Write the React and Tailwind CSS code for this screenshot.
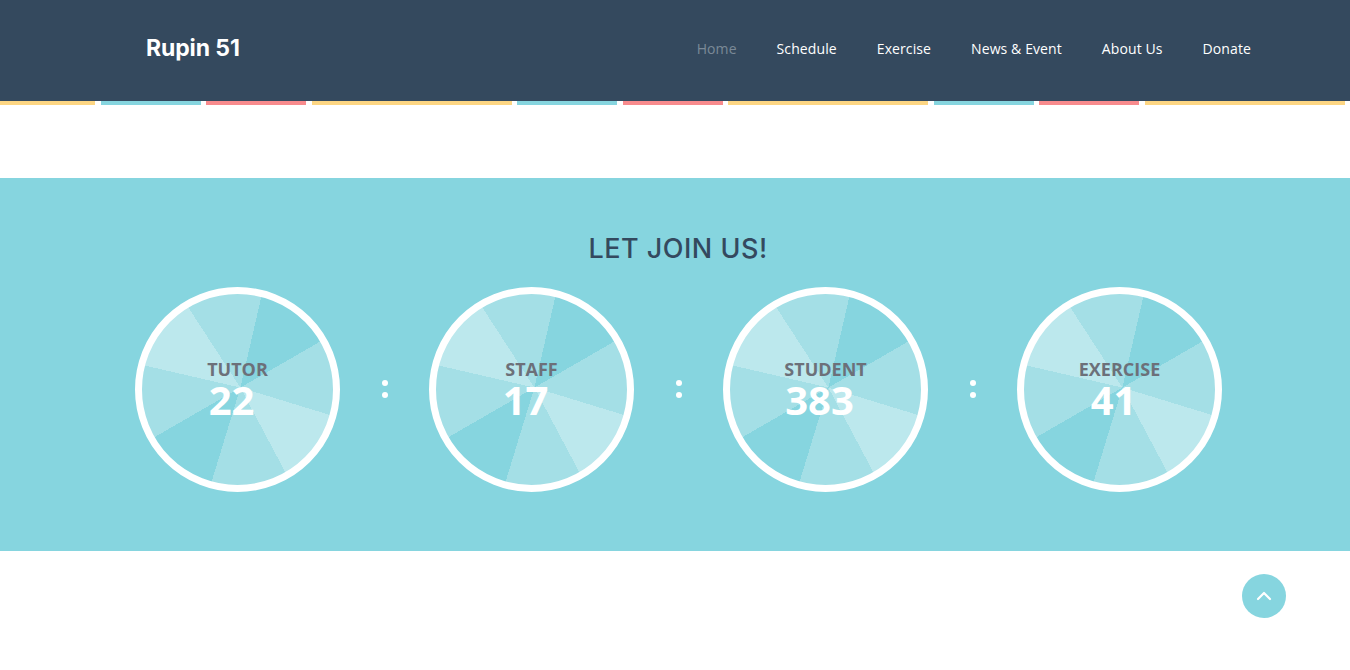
import { ChevronUp } from 'lucide-react'

const NAV = ['Home', 'Schedule', 'Exercise', 'News & Event', 'About Us', 'Donate']

const STRIPE = [
  { w: 'w-[95px]', c: 'bg-[#fdd683]' },
  { w: 'w-[100px]', c: 'bg-[#86d5df]' },
  { w: 'w-[100px]', c: 'bg-[#f88b8d]' },
  { w: 'w-[200px]', c: 'bg-[#fdd683]' },
  { w: 'w-[100px]', c: 'bg-[#86d5df]' },
  { w: 'w-[100px]', c: 'bg-[#f88b8d]' },
  { w: 'w-[200px]', c: 'bg-[#fdd683]' },
  { w: 'w-[100px]', c: 'bg-[#86d5df]' },
  { w: 'w-[100px]', c: 'bg-[#f88b8d]' },
  { w: 'w-[200px]', c: 'bg-[#fdd683]' },
]

const COUNTERS = [
  { label: 'TUTOR', value: 22 },
  { label: 'STAFF', value: 17 },
  { label: 'STUDENT', value: 383 },
  { label: 'EXERCISE', value: 41 },
]

function Counter({ label, value }) {
  return (
    <div className="w-[205px] h-[205px] shrink-0 rounded-full border-[7px] border-white bg-[conic-gradient(from_13deg_at_51.5%_49%,#86d5df_0deg_47deg,#a4dfe6_47deg_94deg,#bce8ed_94deg_139deg,#a4dfe6_139deg_184deg,#86d5df_184deg_227deg,#a4dfe6_227deg_270deg,#bce8ed_270deg_314deg,#a4dfe6_314deg_360deg)] flex flex-col items-center justify-center gap-[2px]">
      <div className="text-[18px] leading-none font-bold text-[#6c7079]">{label}</div>
      <div className="text-[40px] leading-none font-bold text-white pr-[12px]">{value}</div>
    </div>
  )
}

function Colon() {
  return (
    <div className="w-[89px] shrink-0 flex flex-col items-center gap-[6px] pb-[1px]">
      <span className="w-[6px] h-[6px] rounded-full bg-white" />
      <span className="w-[6px] h-[6px] rounded-full bg-white" />
    </div>
  )
}

export default function App() {
  return (
    <div className="relative min-h-[670px] bg-white font-['Open_Sans',sans-serif]">
      {/* Header */}
      <header className="h-[101px] bg-[#34495e] flex items-center justify-between pl-[146px] pr-[99px] pb-[4px]">
        <div className="font-['Inter',sans-serif] font-bold text-[23px] text-white tracking-[-0.1px]">Rupin 51</div>
        <nav className="flex items-center gap-10 text-[14px] tracking-[0.1px]">
          {NAV.map((n, i) => (
            <a key={n} href="#" className={i === 0 ? 'text-[#7b8997]' : 'text-white'}>{n}</a>
          ))}
        </nav>
      </header>
      <div className="h-[4px] flex gap-[5.5px]">
        {STRIPE.map((s, i) => <div key={i} className={`${s.w} ${s.c} h-full shrink-0`} />)}
      </div>

      <div className="h-[73px]" />

      {/* Counters */}
      <section className="h-[373px] bg-[#86d5df] flex flex-col items-center">
        <h2 className="mt-[57px] pl-[6px] font-['Inter',sans-serif] font-medium text-[27px] leading-none text-[#34495e] tracking-[0.5px]">LET JOIN US!</h2>
        <div className="mt-[25px] flex items-center pl-[7px]">
          {COUNTERS.map((c, i) => (
            <div key={c.label} className="flex items-center">
              <Counter {...c} />
              {i < COUNTERS.length - 1 && <Colon />}
            </div>
          ))}
        </div>
      </section>

      {/* Back to top */}
      <button className="absolute left-[1242px] top-[574px] w-[44px] h-[44px] rounded-full bg-[#86d5df] flex items-center justify-center text-white">
        <ChevronUp size={24} strokeWidth={2.2} />
      </button>
    </div>
  )
}
